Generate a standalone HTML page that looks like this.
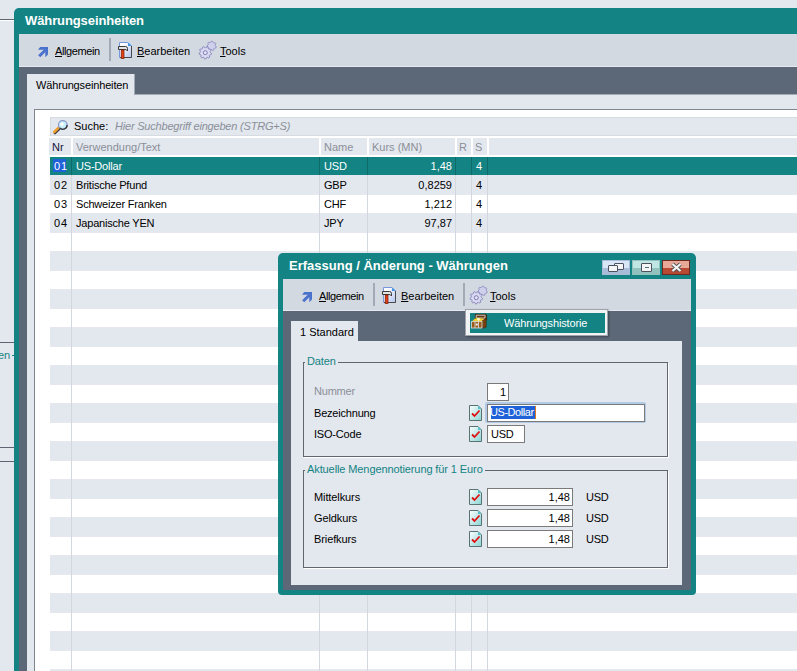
<!DOCTYPE html>
<html><head><meta charset="utf-8">
<style>
*{margin:0;padding:0;box-sizing:border-box}
html,body{width:797px;height:671px;overflow:hidden;background:#e3e7ee;font-family:"Liberation Sans",sans-serif;font-size:11px;color:#000}
.a{position:absolute}
.t{position:absolute;white-space:nowrap;line-height:13px}
svg{position:absolute;overflow:visible}
</style></head><body>

<div class="a" style="left:0px;top:19px;width:14px;height:1px;background:#5d6472;"></div>
<div class="a" style="left:0px;top:20px;width:14px;height:1px;background:#fff;"></div>
<div class="a" style="left:0px;top:342px;width:14px;height:1px;background:#5d6472;"></div>
<div class="t" style="left:-2px;top:349px;color:#138383">en</div>
<div class="a" style="left:12px;top:355px;width:2px;height:1px;background:#138383;"></div>
<div class="a" style="left:0px;top:447px;width:14px;height:1px;background:#5d6472;"></div>
<div class="a" style="left:0px;top:461px;width:14px;height:1px;background:#5d6472;"></div>
<div class="a" style="left:14px;top:8px;width:800px;height:700px;background:#138383;border-top-left-radius:5px"></div>
<div class="t" style="left:25px;top:13px;color:#fff;font-size:13px;font-weight:bold;line-height:15px;letter-spacing:-0.1px">Währungseinheiten</div>
<div class="a" style="left:19px;top:34px;width:800px;height:33px;background:#d3d9e1;"></div>
<div class="a" style="left:19px;top:66px;width:800px;height:1px;background:#e6e9ee;"></div>
<div class="a" style="left:19px;top:67px;width:800px;height:700px;background:#5c6878;"></div>
<div class="a" style="left:27px;top:74px;width:107px;height:21px;background:#e3e7ee;"></div>
<div class="t" style="left:36px;top:79px;letter-spacing:-0.15px">Währungseinheiten</div>
<div class="a" style="left:27px;top:95px;width:800px;height:700px;background:#e3e7ee;"></div>
<div class="a" style="left:134px;top:94px;width:700px;height:1px;background:#a3abb6;"></div>
<div class="a" style="left:134px;top:74px;width:1px;height:21px;background:#a3abb6;"></div>
<svg style="left:37px;top:46px" width="12" height="12" viewBox="0 0 12 12"><path d="M1 3.7 L3.2 1 L11 1 L11 8.6 L8.3 11.2 L8.3 3.7 Z" fill="#4a72cc"/><path d="M2.2 10.3 L8.5 4" stroke="#4a72cc" stroke-width="3"/></svg>
<div class="t" style="left:55px;top:45px;letter-spacing:-0.4px"><u>A</u>llgemein</div>
<div class="a" style="left:109px;top:38px;width:2px;height:23px;background:#a3aab5;"></div>
<svg style="left:117px;top:41px" width="16" height="18" viewBox="0 0 16 18"><defs><linearGradient id="dg" x1="0" y1="0" x2="1" y2="1"><stop offset="0.2" stop-color="#ffffff"/><stop offset="1" stop-color="#b4c4f0"/></linearGradient></defs><path d="M2.5 1.5 H11 L14.5 5 V16.5 H2.5 Z" fill="url(#dg)" stroke="#7896dc"/><path d="M14.5 5 V16.5 H3" fill="none" stroke="#4a4a4a"/><path d="M11 1.5 L14.5 5 H11 Z" fill="#3a94e8"/><path d="M1.5 5.5 H8.5 Q10.5 5.5 10.5 7.5 V10 Q9.8 8.5 8 8.5 H1.5 Z" fill="#e4e4e4" stroke="#3a3a3a"/><rect x="4.2" y="9" width="2.8" height="8.6" fill="#e63e16" stroke="#701c08" stroke-width="0.7"/></svg>
<div class="t" style="left:137px;top:45px;"><u>B</u>earbeiten</div>
<svg style="left:199px;top:41px" width="19" height="19" viewBox="0 0 19 19"><path d="M17.30,5.85 L16.97,6.88 L15.55,7.14 L14.98,7.74 L14.79,9.17 L13.78,9.55 L12.69,8.60 L11.86,8.53 L10.62,9.27 L9.70,8.72 L9.76,7.28 L9.31,6.59 L7.95,6.08 L7.80,5.02 L8.97,4.16 L9.23,3.38 L8.78,2.00 L9.52,1.22 L10.91,1.61 L11.69,1.31 L12.48,0.10 L13.55,0.20 L14.12,1.53 L14.84,1.95 L16.28,1.82 L16.87,2.71 L16.19,3.99 L16.30,4.81 Z" fill="#cfd0ec" stroke="#8886bc" stroke-width="0.8"/><path d="M12.57,12.33 L12.36,13.41 L10.80,13.87 L10.36,14.62 L10.70,16.21 L9.85,16.91 L8.36,16.26 L7.53,16.55 L6.77,17.98 L5.67,17.97 L4.94,16.51 L4.13,16.20 L2.62,16.81 L1.79,16.10 L2.17,14.52 L1.74,13.76 L0.19,13.25 L0.02,12.17 L1.32,11.20 L1.49,10.34 L0.62,8.97 L1.19,8.02 L2.81,8.12 L3.48,7.57 L3.71,5.96 L4.75,5.59 L5.93,6.71 L6.80,6.72 L8.01,5.64 L9.03,6.02 L9.22,7.64 L9.88,8.21 L11.51,8.15 L12.04,9.11 L11.15,10.47 L11.29,11.33 Z" fill="#dadaf2" stroke="#7c7ab4" stroke-width="0.8"/><circle cx="6.3" cy="11.7" r="2" fill="#e4e4f6" stroke="#7c7ab4" stroke-width="1"/></svg>
<div class="t" style="left:220px;top:45px;"><u>T</u>ools</div>
<div class="a" style="left:34px;top:109px;width:800px;height:700px;background:#fff;border-top:1px solid #80868f;border-left:1px solid #80868f"></div>
<div class="a" style="left:50px;top:117px;width:760px;height:19px;background:#e3e7ee;border:1px solid #d6dbe2"></div>
<svg style="left:50px;top:116px" width="22" height="22" viewBox="0 0 22 22"><path d="M4.2 16 L8.4 11.8" stroke="#404040" stroke-width="3" stroke-linecap="round" transform="translate(0.8,0.8)"/><path d="M4.2 16 L8.4 11.8" stroke="#f0a030" stroke-width="2.6" stroke-linecap="round"/><circle cx="12.8" cy="9" r="4.3" fill="#c8f0ff" stroke="#8898c8" stroke-width="1.2"/><path d="M17.1 9 A4.3 4.3 0 0 1 9.8 12.1" fill="none" stroke="#3a3a3a" stroke-width="1.4"/><circle cx="12" cy="8.2" r="1.6" fill="#fff"/></svg>
<div class="t" style="left:74px;top:120px;">Suche:</div>
<div class="t" style="left:115px;top:120px;color:#8a8f99;font-style:italic;letter-spacing:-0.2px">Hier Suchbegriff eingeben (STRG+S)</div>
<div class="a" style="left:49px;top:138px;width:760px;height:17px;background:#e3e7ee;"></div>
<div class="a" style="left:71px;top:138px;width:2px;height:17px;background:#fff;"></div>
<div class="a" style="left:319px;top:138px;width:2px;height:17px;background:#fff;"></div>
<div class="a" style="left:367px;top:138px;width:2px;height:17px;background:#fff;"></div>
<div class="a" style="left:455px;top:138px;width:2px;height:17px;background:#fff;"></div>
<div class="a" style="left:471px;top:138px;width:2px;height:17px;background:#fff;"></div>
<div class="a" style="left:487px;top:138px;width:2px;height:17px;background:#fff;"></div>
<div class="t" style="left:52px;top:141px;color:#14143c">Nr</div>
<div class="t" style="left:76px;top:141px;color:#8a8f99">Verwendung/Text</div>
<div class="t" style="left:324px;top:141px;color:#8a8f99">Name</div>
<div class="t" style="left:372px;top:141px;color:#8a8f99">Kurs (MN)</div>
<div class="t" style="left:459px;top:141px;color:#8a8f99">R</div>
<div class="t" style="left:475px;top:141px;color:#8a8f99">S</div>
<div class="a" style="left:50px;top:157px;width:760px;height:18px;background:#138383;"></div>
<div class="a" style="left:50px;top:175px;width:760px;height:1px;background:#e5e8ee;"></div>
<div class="a" style="left:50px;top:176px;width:760px;height:18px;background:#e3e7ee;"></div>
<div class="a" style="left:50px;top:194px;width:760px;height:1px;background:#e5e8ee;"></div>
<div class="a" style="left:50px;top:213px;width:760px;height:1px;background:#e5e8ee;"></div>
<div class="a" style="left:50px;top:214px;width:760px;height:18px;background:#e3e7ee;"></div>
<div class="a" style="left:50px;top:232px;width:760px;height:1px;background:#e5e8ee;"></div>
<div class="a" style="left:50px;top:251px;width:760px;height:1px;background:#e5e8ee;"></div>
<div class="a" style="left:50px;top:252px;width:760px;height:18px;background:#e3e7ee;"></div>
<div class="a" style="left:50px;top:270px;width:760px;height:1px;background:#e5e8ee;"></div>
<div class="a" style="left:50px;top:289px;width:760px;height:1px;background:#e5e8ee;"></div>
<div class="a" style="left:50px;top:290px;width:760px;height:18px;background:#e3e7ee;"></div>
<div class="a" style="left:50px;top:308px;width:760px;height:1px;background:#e5e8ee;"></div>
<div class="a" style="left:50px;top:327px;width:760px;height:1px;background:#e5e8ee;"></div>
<div class="a" style="left:50px;top:328px;width:760px;height:18px;background:#e3e7ee;"></div>
<div class="a" style="left:50px;top:346px;width:760px;height:1px;background:#e5e8ee;"></div>
<div class="a" style="left:50px;top:365px;width:760px;height:1px;background:#e5e8ee;"></div>
<div class="a" style="left:50px;top:366px;width:760px;height:18px;background:#e3e7ee;"></div>
<div class="a" style="left:50px;top:384px;width:760px;height:1px;background:#e5e8ee;"></div>
<div class="a" style="left:50px;top:403px;width:760px;height:1px;background:#e5e8ee;"></div>
<div class="a" style="left:50px;top:404px;width:760px;height:18px;background:#e3e7ee;"></div>
<div class="a" style="left:50px;top:422px;width:760px;height:1px;background:#e5e8ee;"></div>
<div class="a" style="left:50px;top:441px;width:760px;height:1px;background:#e5e8ee;"></div>
<div class="a" style="left:50px;top:442px;width:760px;height:18px;background:#e3e7ee;"></div>
<div class="a" style="left:50px;top:460px;width:760px;height:1px;background:#e5e8ee;"></div>
<div class="a" style="left:50px;top:479px;width:760px;height:1px;background:#e5e8ee;"></div>
<div class="a" style="left:50px;top:480px;width:760px;height:18px;background:#e3e7ee;"></div>
<div class="a" style="left:50px;top:498px;width:760px;height:1px;background:#e5e8ee;"></div>
<div class="a" style="left:50px;top:517px;width:760px;height:1px;background:#e5e8ee;"></div>
<div class="a" style="left:50px;top:518px;width:760px;height:18px;background:#e3e7ee;"></div>
<div class="a" style="left:50px;top:536px;width:760px;height:1px;background:#e5e8ee;"></div>
<div class="a" style="left:50px;top:555px;width:760px;height:1px;background:#e5e8ee;"></div>
<div class="a" style="left:50px;top:556px;width:760px;height:18px;background:#e3e7ee;"></div>
<div class="a" style="left:50px;top:574px;width:760px;height:1px;background:#e5e8ee;"></div>
<div class="a" style="left:50px;top:593px;width:760px;height:1px;background:#e5e8ee;"></div>
<div class="a" style="left:50px;top:594px;width:760px;height:18px;background:#e3e7ee;"></div>
<div class="a" style="left:50px;top:612px;width:760px;height:1px;background:#e5e8ee;"></div>
<div class="a" style="left:50px;top:631px;width:760px;height:1px;background:#e5e8ee;"></div>
<div class="a" style="left:50px;top:632px;width:760px;height:18px;background:#e3e7ee;"></div>
<div class="a" style="left:50px;top:650px;width:760px;height:1px;background:#e5e8ee;"></div>
<div class="a" style="left:50px;top:669px;width:760px;height:1px;background:#e5e8ee;"></div>
<div class="a" style="left:50px;top:670px;width:760px;height:18px;background:#e3e7ee;"></div>
<div class="a" style="left:50px;top:688px;width:760px;height:1px;background:#e5e8ee;"></div>
<div class="a" style="left:50px;top:707px;width:760px;height:1px;background:#e5e8ee;"></div>
<div class="a" style="left:50px;top:708px;width:760px;height:18px;background:#e3e7ee;"></div>
<div class="a" style="left:50px;top:726px;width:760px;height:1px;background:#e5e8ee;"></div>
<div class="a" style="left:71px;top:157px;width:1px;height:600px;background:#d3d8df;"></div>
<div class="a" style="left:319px;top:157px;width:1px;height:600px;background:#d3d8df;"></div>
<div class="a" style="left:367px;top:157px;width:1px;height:600px;background:#d3d8df;"></div>
<div class="a" style="left:455px;top:157px;width:1px;height:600px;background:#d3d8df;"></div>
<div class="a" style="left:471px;top:157px;width:1px;height:600px;background:#d3d8df;"></div>
<div class="a" style="left:487px;top:157px;width:1px;height:600px;background:#d3d8df;"></div>
<div class="a" style="left:71px;top:157px;width:1px;height:18px;background:#0f6a6a;"></div>
<div class="a" style="left:319px;top:157px;width:1px;height:18px;background:#0f6a6a;"></div>
<div class="a" style="left:367px;top:157px;width:1px;height:18px;background:#0f6a6a;"></div>
<div class="a" style="left:455px;top:157px;width:1px;height:18px;background:#0f6a6a;"></div>
<div class="a" style="left:471px;top:157px;width:1px;height:18px;background:#0f6a6a;"></div>
<div class="a" style="left:487px;top:157px;width:1px;height:18px;background:#0f6a6a;"></div>
<div class="a" style="left:53px;top:159px;width:13px;height:13px;background:#1f62d8;"></div>
<div class="t" style="left:50px;top:160px;width:18px;text-align:right;letter-spacing:0.9px;color:#fff">01</div>
<div class="t" style="left:76px;top:160px;color:#fff;letter-spacing:-0.2px">US-Dollar</div>
<div class="t" style="left:324px;top:160px;color:#fff;letter-spacing:-0.2px">USD</div>
<div class="t" style="left:368px;top:160px;width:84px;text-align:right;color:#fff">1,48</div>
<div class="t" style="left:476px;top:160px;color:#fff">4</div>
<div class="t" style="left:50px;top:179px;width:18px;text-align:right;letter-spacing:0.9px;color:#000">02</div>
<div class="t" style="left:76px;top:179px;color:#000;letter-spacing:-0.2px">Britische Pfund</div>
<div class="t" style="left:324px;top:179px;color:#000;letter-spacing:-0.2px">GBP</div>
<div class="t" style="left:368px;top:179px;width:84px;text-align:right;color:#000">0,8259</div>
<div class="t" style="left:476px;top:179px;color:#000">4</div>
<div class="t" style="left:50px;top:198px;width:18px;text-align:right;letter-spacing:0.9px;color:#000">03</div>
<div class="t" style="left:76px;top:198px;color:#000;letter-spacing:-0.2px">Schweizer Franken</div>
<div class="t" style="left:324px;top:198px;color:#000;letter-spacing:-0.2px">CHF</div>
<div class="t" style="left:368px;top:198px;width:84px;text-align:right;color:#000">1,212</div>
<div class="t" style="left:476px;top:198px;color:#000">4</div>
<div class="t" style="left:50px;top:217px;width:18px;text-align:right;letter-spacing:0.9px;color:#000">04</div>
<div class="t" style="left:76px;top:217px;color:#000;letter-spacing:-0.2px">Japanische YEN</div>
<div class="t" style="left:324px;top:217px;color:#000;letter-spacing:-0.2px">JPY</div>
<div class="t" style="left:368px;top:217px;width:84px;text-align:right;color:#000">97,87</div>
<div class="t" style="left:476px;top:217px;color:#000">4</div>
<div class="a" style="left:278px;top:253px;width:418px;height:342px;background:#138383;border-radius:5px 5px 4px 4px"></div>
<div class="t" style="left:289px;top:258px;color:#fff;font-size:13px;font-weight:bold;line-height:15px">Erfassung / Änderung - Währungen</div>
<div class="a" style="left:602px;top:260px;width:28px;height:15px;background:linear-gradient(#d8e6f6 0%,#d8e6f6 50%,#a8bcd8 51%,#a8bcd8 100%);border:1px solid #a8bcd8"><div class="a" style="left:11px;top:2px;width:10px;height:7px;border:1.5px solid #4a5060;background:#f4f4f4;border-radius:1px"></div><div class="a" style="left:5px;top:4px;width:10px;height:7px;border:1.5px solid #4a5060;background:#f4f4f4;border-radius:1px"></div></div>
<div class="a" style="left:632px;top:260px;width:28px;height:15px;background:linear-gradient(#bfe6e2 0%,#bfe6e2 50%,#92c2bd 51%,#92c2bd 100%);border:1px solid #92c2bd"><div class="a" style="left:8px;top:2px;width:11px;height:9px;border:1.5px solid #4a5060;background:#f4f4f4;border-radius:1px"><div class="a" style="left:2.5px;top:2.5px;width:4px;height:1.5px;background:#4a7080"></div></div></div>
<div class="a" style="left:662px;top:260px;width:28px;height:15px;background:linear-gradient(#e8a898 0%,#e8a898 50%,#b84a34 51%,#b84a34 100%);border:1px solid #6a2a20"><svg style="left:8px;top:2px" width="11" height="9" viewBox="0 0 11 9"><path d="M1.5 1 L9.5 8 M9.5 1 L1.5 8" stroke="#505050" stroke-width="3.8"/><path d="M1.5 1 L9.5 8 M9.5 1 L1.5 8" stroke="#f4f4f4" stroke-width="2.2"/></svg></div>
<div class="a" style="left:283px;top:279px;width:408px;height:32px;background:#d3d9e1;"></div>
<div class="a" style="left:283px;top:310px;width:408px;height:1px;background:#e6e9ee;"></div>
<div class="a" style="left:283px;top:311px;width:408px;height:279px;background:#5c6878;"></div>
<div class="a" style="left:291px;top:321px;width:67px;height:21px;background:#e3e7ee;"></div>
<div class="t" style="left:300px;top:326px;">1 Standard</div>
<div class="a" style="left:291px;top:341px;width:391px;height:244px;background:#e3e7ee;"></div>
<svg style="left:301px;top:291px" width="12" height="12" viewBox="0 0 12 12"><path d="M1 3.7 L3.2 1 L11 1 L11 8.6 L8.3 11.2 L8.3 3.7 Z" fill="#4a72cc"/><path d="M2.2 10.3 L8.5 4" stroke="#4a72cc" stroke-width="3"/></svg>
<div class="t" style="left:319px;top:290px;letter-spacing:-0.4px"><u>A</u>llgemein</div>
<div class="a" style="left:373px;top:283px;width:2px;height:23px;background:#a3aab5;"></div>
<svg style="left:381px;top:286px" width="16" height="18" viewBox="0 0 16 18"><defs><linearGradient id="dg" x1="0" y1="0" x2="1" y2="1"><stop offset="0.2" stop-color="#ffffff"/><stop offset="1" stop-color="#b4c4f0"/></linearGradient></defs><path d="M2.5 1.5 H11 L14.5 5 V16.5 H2.5 Z" fill="url(#dg)" stroke="#7896dc"/><path d="M14.5 5 V16.5 H3" fill="none" stroke="#4a4a4a"/><path d="M11 1.5 L14.5 5 H11 Z" fill="#3a94e8"/><path d="M1.5 5.5 H8.5 Q10.5 5.5 10.5 7.5 V10 Q9.8 8.5 8 8.5 H1.5 Z" fill="#e4e4e4" stroke="#3a3a3a"/><rect x="4.2" y="9" width="2.8" height="8.6" fill="#e63e16" stroke="#701c08" stroke-width="0.7"/></svg>
<div class="t" style="left:401px;top:290px;"><u>B</u>earbeiten</div>
<div class="a" style="left:463px;top:283px;width:2px;height:23px;background:#a3aab5;"></div>
<svg style="left:470px;top:286px" width="19" height="19" viewBox="0 0 19 19"><path d="M17.30,5.85 L16.97,6.88 L15.55,7.14 L14.98,7.74 L14.79,9.17 L13.78,9.55 L12.69,8.60 L11.86,8.53 L10.62,9.27 L9.70,8.72 L9.76,7.28 L9.31,6.59 L7.95,6.08 L7.80,5.02 L8.97,4.16 L9.23,3.38 L8.78,2.00 L9.52,1.22 L10.91,1.61 L11.69,1.31 L12.48,0.10 L13.55,0.20 L14.12,1.53 L14.84,1.95 L16.28,1.82 L16.87,2.71 L16.19,3.99 L16.30,4.81 Z" fill="#cfd0ec" stroke="#8886bc" stroke-width="0.8"/><path d="M12.57,12.33 L12.36,13.41 L10.80,13.87 L10.36,14.62 L10.70,16.21 L9.85,16.91 L8.36,16.26 L7.53,16.55 L6.77,17.98 L5.67,17.97 L4.94,16.51 L4.13,16.20 L2.62,16.81 L1.79,16.10 L2.17,14.52 L1.74,13.76 L0.19,13.25 L0.02,12.17 L1.32,11.20 L1.49,10.34 L0.62,8.97 L1.19,8.02 L2.81,8.12 L3.48,7.57 L3.71,5.96 L4.75,5.59 L5.93,6.71 L6.80,6.72 L8.01,5.64 L9.03,6.02 L9.22,7.64 L9.88,8.21 L11.51,8.15 L12.04,9.11 L11.15,10.47 L11.29,11.33 Z" fill="#dadaf2" stroke="#7c7ab4" stroke-width="0.8"/><circle cx="6.3" cy="11.7" r="2" fill="#e4e4f6" stroke="#7c7ab4" stroke-width="1"/></svg>
<div class="t" style="left:490px;top:290px;"><u>T</u>ools</div>
<div class="a" style="left:303px;top:362px;width:365px;height:95px;background:transparent;border:1px solid #5f6670;box-shadow:1px 1px 0 #fff"></div>
<div class="t" style="left:305px;top:355px;padding:0 2px;background:#e3e7ee;color:#138383;letter-spacing:-0.1px">Daten</div>
<div class="t" style="left:314px;top:385px;color:#8a8f99;letter-spacing:-0.2px">Nummer</div>
<div class="t" style="left:314px;top:407px;letter-spacing:-0.2px">Bezeichnung</div>
<div class="t" style="left:314px;top:428px;letter-spacing:-0.2px">ISO-Code</div>
<div class="a" style="left:487px;top:383px;width:22px;height:18px;background:#fff;border:1px solid #7a7a7a;"></div>
<div class="t" style="left:487px;top:386px;width:19px;text-align:right">1</div>
<div class="a" style="left:485px;top:402px;width:161px;height:21px;background:#b2cae6;border-radius:2px"></div>
<div class="a" style="left:487px;top:404px;width:158px;height:18px;background:#fff;border:1px solid #7a7a7a;"></div>
<div class="a" style="left:491px;top:406px;width:45px;height:13px;background:#1f62d8;"></div>
<div class="t" style="left:490px;top:406px;color:#fff;letter-spacing:-0.45px">US-Dollar</div>
<div class="a" style="left:535px;top:406px;width:1px;height:13px;background:#e07a20;"></div>
<svg style="left:469px;top:405px" width="14" height="16" viewBox="0 0 14 16"><defs><linearGradient id="cg" x1="0" y1="0" x2="1" y2="1"><stop offset="0" stop-color="#ffffff"/><stop offset="1" stop-color="#8ad4d4"/></linearGradient></defs><path d="M0.5 0.5 H9 L12.5 4 V15.5 H0.5 Z" fill="url(#cg)" stroke="#5a7272"/><path d="M9 0.5 L12.5 4 H9 Z" fill="#58c0c8"/><path d="M3 8.5 L5.5 11 L10.5 5.5" stroke="#e01010" stroke-width="1.8" fill="none"/></svg>
<div class="a" style="left:487px;top:425px;width:38px;height:18px;background:#fff;border:1px solid #7a7a7a;"></div>
<div class="t" style="left:491px;top:428px;letter-spacing:-0.3px">USD</div>
<svg style="left:469px;top:426px" width="14" height="16" viewBox="0 0 14 16"><defs><linearGradient id="cg" x1="0" y1="0" x2="1" y2="1"><stop offset="0" stop-color="#ffffff"/><stop offset="1" stop-color="#8ad4d4"/></linearGradient></defs><path d="M0.5 0.5 H9 L12.5 4 V15.5 H0.5 Z" fill="url(#cg)" stroke="#5a7272"/><path d="M9 0.5 L12.5 4 H9 Z" fill="#58c0c8"/><path d="M3 8.5 L5.5 11 L10.5 5.5" stroke="#e01010" stroke-width="1.8" fill="none"/></svg>
<div class="a" style="left:303px;top:470px;width:365px;height:98px;background:transparent;border:1px solid #5f6670;box-shadow:1px 1px 0 #fff"></div>
<div class="t" style="left:305px;top:463px;padding:0 2px;background:#e3e7ee;color:#138383;letter-spacing:-0.1px">Aktuelle Mengennotierung für 1 Euro</div>
<div class="t" style="left:314px;top:491px;letter-spacing:-0.1px">Mittelkurs</div>
<svg style="left:469px;top:489px" width="14" height="16" viewBox="0 0 14 16"><defs><linearGradient id="cg" x1="0" y1="0" x2="1" y2="1"><stop offset="0" stop-color="#ffffff"/><stop offset="1" stop-color="#8ad4d4"/></linearGradient></defs><path d="M0.5 0.5 H9 L12.5 4 V15.5 H0.5 Z" fill="url(#cg)" stroke="#5a7272"/><path d="M9 0.5 L12.5 4 H9 Z" fill="#58c0c8"/><path d="M3 8.5 L5.5 11 L10.5 5.5" stroke="#e01010" stroke-width="1.8" fill="none"/></svg>
<div class="a" style="left:487px;top:488px;width:86px;height:18px;background:#fff;border:1px solid #7a7a7a;"></div>
<div class="t" style="left:487px;top:491px;width:83px;text-align:right">1,48</div>
<div class="t" style="left:586px;top:491px;letter-spacing:-0.3px">USD</div>
<div class="t" style="left:314px;top:512px;letter-spacing:-0.1px">Geldkurs</div>
<svg style="left:469px;top:510px" width="14" height="16" viewBox="0 0 14 16"><defs><linearGradient id="cg" x1="0" y1="0" x2="1" y2="1"><stop offset="0" stop-color="#ffffff"/><stop offset="1" stop-color="#8ad4d4"/></linearGradient></defs><path d="M0.5 0.5 H9 L12.5 4 V15.5 H0.5 Z" fill="url(#cg)" stroke="#5a7272"/><path d="M9 0.5 L12.5 4 H9 Z" fill="#58c0c8"/><path d="M3 8.5 L5.5 11 L10.5 5.5" stroke="#e01010" stroke-width="1.8" fill="none"/></svg>
<div class="a" style="left:487px;top:509px;width:86px;height:18px;background:#fff;border:1px solid #7a7a7a;"></div>
<div class="t" style="left:487px;top:512px;width:83px;text-align:right">1,48</div>
<div class="t" style="left:586px;top:512px;letter-spacing:-0.3px">USD</div>
<div class="t" style="left:314px;top:533px;letter-spacing:-0.1px">Briefkurs</div>
<svg style="left:469px;top:531px" width="14" height="16" viewBox="0 0 14 16"><defs><linearGradient id="cg" x1="0" y1="0" x2="1" y2="1"><stop offset="0" stop-color="#ffffff"/><stop offset="1" stop-color="#8ad4d4"/></linearGradient></defs><path d="M0.5 0.5 H9 L12.5 4 V15.5 H0.5 Z" fill="url(#cg)" stroke="#5a7272"/><path d="M9 0.5 L12.5 4 H9 Z" fill="#58c0c8"/><path d="M3 8.5 L5.5 11 L10.5 5.5" stroke="#e01010" stroke-width="1.8" fill="none"/></svg>
<div class="a" style="left:487px;top:530px;width:86px;height:18px;background:#fff;border:1px solid #7a7a7a;"></div>
<div class="t" style="left:487px;top:533px;width:83px;text-align:right">1,48</div>
<div class="t" style="left:586px;top:533px;letter-spacing:-0.3px">USD</div>
<div class="a" style="left:465px;top:309px;width:143px;height:27px;background:#f2f3f5;border:1px solid #a0a4ac;box-shadow:1px 1px 2px rgba(0,0,0,.35)"></div>
<div class="a" style="left:470px;top:313px;width:135px;height:20px;background:#138383;"></div>
<svg style="left:470px;top:313px" width="18" height="17" viewBox="0 0 18 17"><path d="M5.3 1.3 H15.8 L16.6 2 V7 H5.3 Z" fill="#6a3a10" stroke="#3a2008" stroke-width="0.8"/><path d="M6.2 2.2 H15 V5 H6.2 Z" fill="none" stroke="#d0d0d0" stroke-width="0.9"/><path d="M2 8.5 Q5 4.5 9 5.2 Q13 4.8 15.5 7 L13 9.5 H2 Z" fill="#f0d030"/><circle cx="8.5" cy="6.3" r="1.4" fill="#fff8c0"/><path d="M12 8 L16.2 5.5 V14 L12 15.5 Z" fill="#7a4210" stroke="#3a2008" stroke-width="0.6"/><rect x="1.4" y="8.6" width="10.6" height="6.4" fill="#9a5a18" stroke="#d8d8d8" stroke-width="0.9"/><path d="M5 8.6 V15 M8.5 8.6 V15" stroke="#d8d8d8" stroke-width="0.9"/><rect x="5.8" y="10.5" width="2" height="2" fill="#f0f0f0"/></svg>
<div class="t" style="left:504px;top:317px;color:#fff;letter-spacing:-0.15px">Währungshistorie</div>
</body></html>
